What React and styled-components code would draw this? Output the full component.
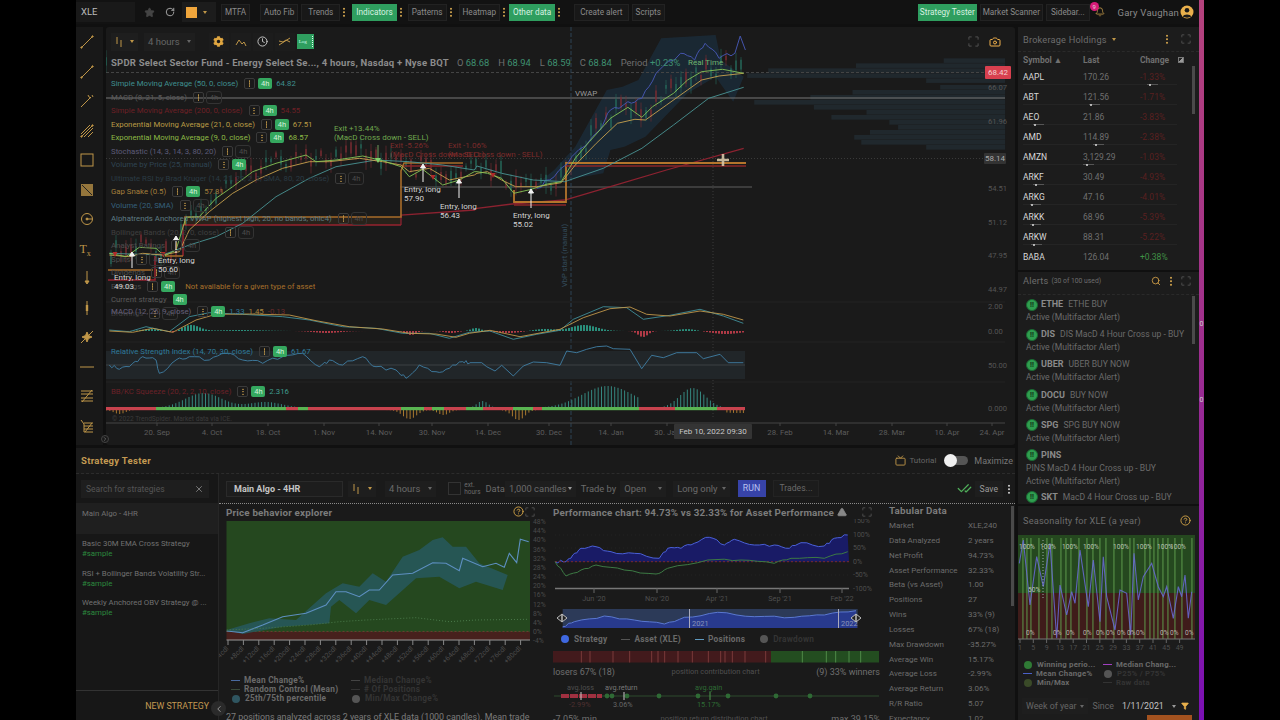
import styled, { createGlobalStyle } from "styled-components";
import { Star, RotateCw, Clock, Camera, Bell, X, Search, CheckCheck, Tv, ChevronLeft, ChevronRight, CircleHelp, TriangleAlert, Filter } from "lucide-react";
import { FaCog } from "react-icons/fa";

const GOLD = "#bf9648";
const DIM = "#8b8b8b";

const Global = createGlobalStyle`
  html, body { margin: 0; padding: 0; background: #000; }
  body { font-family: Roboto, "Liberation Sans", sans-serif; color: ${DIM}; }
  * { box-sizing: border-box; }
`;

// chart data is kept in page coordinates, traced from the picture
const z6 = pts => pts.map(([x, y]) => [76 + x / 3, 130 + y / 3]);
const z7 = pts => pts.map(([x, y]) => [470 + x / 2.85, 30 + y / 3]);
const z8 = pts => pts.map(([x, y]) => [470 + x / 3, 296 + y / 3]);
const z4 = pts => pts.map(([x, y]) => [540 + x / 3, 450 + y / 3]);
const z3 = pts => pts.map(([x, y]) => [76 + x / 3, 450 + y / 3]);
const z5 = pts => pts.map(([x, y]) => [1010 + x / 3, 270 + y / 3]);
const line = pts => pts.map(p => p[0].toFixed(1) + "," + p[1].toFixed(1)).join(" ");
const noise = i => {
  const v = Math.sin(i * 12.9898) * 43758.5453;
  return v - Math.floor(v);
};
const jag = (pts, amp) => {
  const out = [];
  pts.forEach((p, i) => {
    out.push(p);
    const n = pts[i + 1];
    if (!n) return;
    for (let k = 1; k < 4; k++) {
      const t = k / 4;
      out.push([p[0] + (n[0] - p[0]) * t, p[1] + (n[1] - p[1]) * t + (noise(i * 7 + k) - 0.5) * amp]);
    }
  });
  return out;
};
const yAt = (pts, x) => {
  for (let i = 0; i < pts.length - 1; i++) {
    if (x >= pts[i][0] && x <= pts[i + 1][0]) {
      const t = (x - pts[i][0]) / (pts[i + 1][0] - pts[i][0] || 1);
      return pts[i][1] + (pts[i + 1][1] - pts[i][1]) * t;
    }
  }
  return pts[pts.length - 1][1];
};
const bump = (x, c, w, a) => a * Math.exp(-((x - c) ** 2) / (w * w));

const greenEma = [
  ...z6([[100, 370], [150, 380], [190, 352], [240, 355], [265, 378], [300, 360], [330, 262], [370, 260], [420, 205], [470, 170], [530, 125], [600, 100], [690, 75], [720, 95], [780, 90], [860, 78], [920, 92], [975, 110], [1000, 140], [1040, 118], [1100, 165], [1150, 150], [1195, 125]]),
  ...z7([[20, 425], [50, 430], [90, 445], [125, 490], [175, 478], [220, 462], [260, 455], [300, 385], [340, 335], [400, 265], [450, 232], [490, 262], [520, 230], [580, 190], [620, 150], [660, 125], [720, 118], [780, 130]]),
];
const yellowEma = [
  ...z6([[100, 375], [160, 380], [200, 370], [260, 375], [310, 365], [340, 300], [400, 245], [470, 190], [540, 150], [620, 115], [700, 95], [760, 95], [850, 85], [920, 95], [975, 105], [1000, 125], [1060, 115], [1120, 150], [1195, 135]]),
  ...z7([[20, 430], [50, 425], [90, 450], [130, 470], [190, 470], [260, 458], [300, 405], [360, 340], [420, 280], [470, 268], [500, 270], [560, 225], [620, 180], [660, 150], [710, 138], [780, 130]]),
];
const tealSma = [
  ...z6([[100, 370], [260, 375], [340, 345], [420, 320], [500, 280], [600, 200], [700, 145], [780, 110], [900, 90], [1000, 95], [1100, 105], [1195, 120]]),
  ...z7([[20, 408], [90, 430], [180, 450], [270, 455], [380, 415], [490, 355], [580, 285], [680, 205], [780, 172]]),
];
const bluePrice = jag(z7([[190, 475], [240, 440], [290, 380], [370, 300], [400, 240], [450, 215], [490, 205], [530, 130], [600, 70], [640, 90], [670, 40], [710, 85], [755, 70]]), 5).concat(z7([[770, 18], [785, 60]]));
const bandShape = z7([[180, 470], [240, 420], [300, 350], [390, 180], [435, 170], [480, 150], [545, 25], [700, 15], [715, 90], [780, 140], [750, 215], [700, 140], [620, 190], [500, 320], [440, 350], [400, 360], [380, 430], [270, 450]]);
const redStop = [
  ...z6([[975, 285], [975, 255], [1195, 240]]),
  ...z7([[20, 535], [120, 522], [270, 510], [400, 470], [560, 420], [780, 355]]),
];
const candles = Array.from({ length: 128 }, (_, i) => {
  const x = 106 + i * 5;
  const base = yAt(greenEma, x) - 3 + (noise(i) - 0.5) * 18;
  const h = 3 + noise(i + 40) * 9;
  return { x, top: base - h / 2, h, wick: 2 + noise(i + 90) * 6, up: noise(i + 20) > 0.45 };
});
const profile = [[85, 1350], [100, 1100], [115, 850], [130, 790], [145, 1300], [165, 1340], [180, 1090], [195, 970], [210, 810], [225, 980], [240, 1130], [255, 1030], [270, 1195], [285, 1220], [300, 1140], [315, 1095], [330, 1115], [345, 1300]];
const macdBars = Array.from({ length: 213 }, (_, i) => {
  const x = 106 + i * 3;
  const v = bump(x, 190, 12, 6) + bump(x, 150, 12, 2) - bump(x, 172, 6, 2) + bump(x, 240, 30, 1) - bump(x, 326, 18, 2) - bump(x, 410, 7, 4) - bump(x, 450, 9, 2)
    + bump(x, 475, 7, 3) - bump(x, 508, 16, 2) + bump(x, 543, 14, 2) + bump(x, 583, 18, 6) - bump(x, 642, 7, 6) + bump(x, 686, 13, 2) - bump(x, 725, 20, 3);
  return { x, v };
});
const macdTeal = [
  ...z6([[100, 600], [160, 605], [210, 590], [280, 605], [340, 560], [400, 548], [500, 553], [620, 560], [700, 570], [800, 590], [900, 595], [980, 610], [1060, 610], [1120, 625], [1180, 607]]),
  ...z8([[60, 105], [130, 130], [200, 115], [270, 103], [310, 70], [400, 32], [470, 35], [520, 70], [600, 58], [690, 40], [760, 60], [820, 82]]),
];
const macdYellow = [
  ...z6([[100, 603], [170, 607], [230, 595], [290, 607], [360, 570], [420, 553], [520, 552], [640, 555], [720, 572], [820, 590], [920, 597], [1000, 610], [1080, 612], [1140, 622], [1180, 610]]),
  ...z8([[60, 103], [150, 122], [270, 100], [340, 65], [420, 38], [480, 33], [530, 55], [600, 60], [690, 45], [760, 55], [820, 72]]),
];
const rsiLine = [
  ...jag(z6([[100, 705], [130, 718], [170, 700], [200, 680], [240, 690], [250, 730], [300, 690], [340, 680], [400, 690], [450, 670], [500, 690], [560, 700], [620, 680], [680, 670], [730, 710], [760, 690], [800, 705], [860, 680], [900, 710], [960, 720], [990, 745], [1030, 705], [1080, 725], [1120, 715], [1160, 695], [1180, 700]]), 4),
  ...z8([[0, 200], [35, 200], [50, 212], [75, 225], [95, 208], [130, 240], [160, 210], [190, 198], [230, 200], [270, 208], [290, 165], [320, 170], [350, 160], [380, 152], [410, 150], [430, 158], [480, 160], [515, 218], [545, 178], [580, 185], [620, 170], [680, 170], [700, 188], [750, 175], [775, 200], [820, 200]]),
];
const squeezeBars = Array.from({ length: 194 }, (_, i) => {
  const x = 106 + i * 3.3;
  const up = bump(x, 203, 26, 15) + bump(x, 265, 24, 6) + bump(x, 482, 8, 7) + (x > 542 && x < 639 ? bump(x, 607, 36, 22) : 0) + bump(x, 692, 18, 20);
  const down = bump(x, 119, 8, 4) + bump(x, 409, 10, 9) + bump(x, 443, 8, 5) + bump(x, 518, 9, 10) + (x > 725 ? 3 : 0);
  return { x, v: up - down };
});
const squeezeRuns = [[106, 156, "#c8434e"], [156, 176, "#5ab552"], [176, 286, "#5ab552"], [286, 298, "#c8434e"], [298, 308, "#5ab552"], [308, 401, "#c8434e"], [401, 424, "#5ab552"], [424, 432, "#c8434e"], [432, 444, "#5ab552"], [444, 466, "#c8434e"], [466, 483, "#5ab552"], [483, 513, "#c8434e"], [513, 533, "#5ab552"], [533, 542, "#c8434e"], [542, 639, "#5ab552"], [639, 675, "#c8434e"], [675, 717, "#5ab552"], [717, 745, "#c8434e"]];

const bandPrice = z3([[452, 540], [520, 520], [580, 505], [660, 510], [750, 430], [800, 400], [850, 410], [890, 370], [930, 395], [980, 320], [1030, 300], [1070, 270], [1100, 262], [1130, 290], [1170, 290], [1210, 340], [1295, 375], [1280, 420], [1200, 395], [1150, 415], [1090, 380], [1020, 385], [930, 465], [880, 450], [840, 490], [790, 450], [765, 470], [760, 520], [620, 530], [500, 552]]);
const meanPrice = z3([[452, 543], [500, 548], [560, 525], [620, 500], [690, 490], [750, 465], [780, 425], [810, 425], [850, 440], [880, 420], [910, 420], [950, 375], [1010, 370], [1070, 338], [1110, 340], [1150, 362], [1160, 325], [1220, 350], [1260, 340], [1285, 352], [1300, 310], [1322, 338], [1333, 268], [1358, 275]]);
const randomPrice = z3([[452, 540], [560, 535], [700, 525], [790, 515], [870, 510], [1020, 503], [1120, 515], [1200, 510], [1358, 508]]);

const perfBlue = jag(z4([[42, 335], [75, 335], [95, 315], [120, 295], [165, 290], [210, 305], [280, 310], [355, 325], [380, 295], [420, 295], [460, 280], [505, 262], [550, 285], [580, 268], [640, 285], [700, 285], [745, 295], [780, 278], [850, 288], [880, 265], [920, 255]]), 3);
const perfGreen = jag(z4([[42, 335], [75, 378], [120, 360], [165, 345], [250, 360], [345, 372], [380, 355], [500, 330], [600, 330], [700, 340], [750, 325], [850, 325], [920, 305]]), 2);
const navLine = jag(z4([[65, 530], [100, 515], [190, 498], [280, 510], [370, 522], [430, 502], [530, 487], [640, 500], [760, 502], [850, 495], [945, 482]]), 2);
const lossTicks = [127, 153, 222, 272, 338, 357, 377, 417, 460, 508, 545, 558, 580, 618, 680];
const winTicks = [790, 862, 890, 930, 965];

const seasonBars = [1022, 1026, 1030, 1038, 1046, 1051, 1060, 1065, 1070, 1078, 1086, 1092, 1099, 1105, 1113, 1121, 1129, 1133, 1144, 1149, 1153, 1157, 1162, 1167, 1174, 1181, 1191];
const seasonBlue = z5([[28, 880], [40, 810], [60, 1005], [80, 860], [100, 950], [120, 820], [140, 1105], [150, 945], [170, 1035], [185, 965], [195, 1000], [210, 840], [235, 1010], [250, 870], [270, 1055], [280, 860], [290, 980], [315, 1080], [330, 960], [350, 970], [362, 1095], [372, 850], [385, 990], [400, 920], [425, 880], [445, 950], [460, 980], [470, 950], [490, 1045], [505, 950], [515, 980], [525, 915], [535, 1045], [545, 965]]);

const Page = styled.div`
  width: 1280px;
  height: 720px;
  background: #000;
  overflow: hidden;
  display: flex;
  padding-left: 76px;
`;
const Screen = styled.div`
  width: 1123px;
  height: 720px;
  background: #101010;
  display: flex;
  flex-direction: column;
`;
const Stripe = styled.div`
  width: 5px;
  height: 720px;
  background: linear-gradient(#b4427c, #a0308c 45%, #7a10b4);
  color: #ccc;
  font-size: 7px;
  display: flex;
  flex-direction: column;
  align-items: center;
  gap: 68px;
  padding-top: 320px;
`;
const TopBar = styled.div`
  height: 24px;
  flex: none;
  display: flex;
  align-items: center;
  background: #121212;
  font-size: 8.2px;
`;
const Ticker = styled.div`
  width: 59px;
  height: 20px;
  background: #191919;
  color: #bbb;
  font-size: 9.5px;
  line-height: 20px;
  padding-left: 5px;
  margin-right: 9px;
`;
const BarIcon = styled.span`
  display: inline-flex;
  color: ${p => p.$color || "#aaa"};
  margin-right: ${p => p.$mr || 0}px;
`;
const ColorSwatch = styled.span`
  width: 34px;
  height: 20px;
  background: #1c1c1c;
  display: flex;
  align-items: center;
  gap: 6px;
  padding-left: 4px;
  margin: 0 5px 0 7px;
  &::before { content: ""; width: 11px; height: 11px; background: #f0a63c; }
`;
const Caret = styled.span`
  width: 0;
  height: 0;
  border-left: 2.5px solid transparent;
  border-right: 2.5px solid transparent;
  border-top: 3px solid ${p => p.$color || GOLD};
  margin-left: ${p => p.$ml || 0}px;
  flex: none;
`;
const TopButton = styled.div`
  height: 17px;
  line-height: 15px;
  padding: 0 ${p => p.$pad ?? 3}px;
  margin-left: ${p => p.$ml ?? 0}px;
  margin-right: ${p => p.$mr ?? 3}px;
  text-align: center;
  border: 1px solid ${p => (p.$on ? "#2f9e5f" : "#222")};
  background: ${p => (p.$on ? "#2f9e5f" : "#181818")};
  color: ${p => (p.$on ? "#d9f2e2" : DIM)};
  white-space: nowrap;
`;
const Dots = styled.span`
  width: 2px;
  height: 10px;
  margin: 0 ${p => p.$m ?? 3}px;
  flex: none;
  background: radial-gradient(circle at center, ${p => p.$color || GOLD} 1px, transparent 1.1px) 0 0 / 2px 3.5px;
`;
const Spacer = styled.div`
  flex: 1;
`;
const UserName = styled.span`
  font-size: 9.5px;
  letter-spacing: 0.2px;
  margin: 0 1px 0 13px;
`;
const BellWrap = styled.span`
  position: relative;
  display: inline-flex;
  margin-left: 5px;
  color: ${GOLD};
`;
const Badge = styled.span`
  position: absolute;
  top: -5px;
  left: -5px;
  width: 9px;
  height: 9px;
  border-radius: 50%;
  background: #d81b78;
  color: #ddd;
  font-size: 6px;
  line-height: 9px;
  text-align: center;
`;
const Avatar = styled.span`
  display: inline-flex;
  margin-right: 5px;
`;
const Body = styled.div`
  flex: 1;
  display: flex;
  gap: 3px;
  min-height: 0;
  padding-top: 3px;
`;
const LeftCol = styled.div`
  width: 939px;
  flex: none;
  display: flex;
  flex-direction: column;
  gap: 3px;
`;
const ChartRow = styled.div`
  height: 418px;
  flex: none;
  display: flex;
  gap: 3px;
`;
const Rail = styled.div`
  width: 27px;
  flex: none;
  background: #181818;
  display: flex;
  flex-direction: column;
  align-items: center;
  justify-content: space-between;
  padding: 8px 6px 12px 0;
  position: relative;
`;
const RailBtn = styled.span`
  display: flex;
  width: 14px;
  height: 14px;
  color: ${GOLD};
  font-family: "Liberation Serif", serif;
  font-size: 12px;
  line-height: 14px;
  sub { font-size: 8px; }
`;
const RailOpen = styled.span`
  position: absolute;
  right: -6px;
  bottom: 2px;
  width: 8px;
  height: 8px;
  border-radius: 50%;
  border: 1px solid #444;
  background: #1a1a1a;
  color: #999;
  display: flex;
  z-index: 3;
`;
const ChartPanel = styled.div`
  position: relative;
  flex: 1;
  background: #1a1a1a;
  overflow: hidden;
  border-radius: 3px;
`;
const Plot = styled.svg`
  position: absolute;
  inset: 0;
`;
const ChartFlow = styled.div`
  position: relative;
  padding: 5px 0 0 5px;
`;
const ChartTools = styled.div`
  height: 19px;
  display: flex;
  align-items: center;
  color: ${GOLD};
  font-size: 9.5px;
`;
const ToolSelect = styled.span`
  display: flex;
  align-items: center;
  gap: 7px;
  height: 18px;
  padding: 0 4px;
  color: #666;
  background: #1e1e1e;
  margin-right: ${p => p.$mr ?? 6}px;
`;
const ToolBtn = styled.span`
  width: 20px;
  height: 18px;
  margin-right: 2px;
  display: flex;
  align-items: center;
  justify-content: center;
  background: #1c1c1c;
`;
const LogBtn = styled.span`
  width: 17px;
  height: 15px;
  background: #2f9e5f;
  color: #cfe;
  font: 5px/15px "Liberation Serif", serif;
  padding-left: 2px;
  position: relative;
  &::after { content: ""; position: absolute; right: 1px; top: 2px; height: 11px; border-right: 1px dotted #dfe; }
`;
const SymbolLine = styled.div`
  display: flex;
  align-items: center;
  height: 16px;
  margin-top: 3px;
  font-size: 9.4px;
  white-space: nowrap;
`;
const SymbolName = styled.b`
  font-size: 9.5px;
  letter-spacing: 0.22px;
  color: #8c8c8c;
  font-weight: 700;
  margin-right: 8px;
`;
const Ohlc = styled.span`
  margin-right: 9px;
  color: #6f6f6f;
  b { font-weight: 400; color: #3f9071; }
`;
const Legend = styled.div`
  margin-top: 7px;
  display: flex;
  flex-direction: column;
`;
const LegendRow = styled.div`
  height: 13.5px;
  display: flex;
  align-items: center;
  font-size: 7.8px;
  white-space: nowrap;
  color: ${p => p.$color};
`;
const ChipValue = styled.span`
  margin-left: ${p => p.$ml ?? 4}px;
  color: ${p => p.$color || "inherit"};
`;
const DotsChip = styled.span`
  width: 11px;
  height: 11px;
  margin-left: 6px;
  border: 1px solid #3a3a3a;
  border-radius: 2px;
  display: flex;
  justify-content: center;
  align-items: center;
  &::after {
    content: "";
    width: 1.5px;
    height: 7px;
    background: radial-gradient(circle at center, ${GOLD} 0.8px, transparent 0.9px) 0 0 / 1.5px 2.5px;
  }
`;
const TimeChip = styled.span`
  width: 14px;
  height: 11px;
  margin-left: ${p => p.$ml ?? 3}px;
  border-radius: 2px;
  font-size: 7.5px;
  line-height: 11px;
  text-align: center;
  background: ${p => (p.$on ? "#35a85f" : "transparent")};
  color: ${p => (p.$on ? "#d4f0dd" : "#4c4c4c")};
  outline: ${p => (p.$on ? "none" : "1px solid #333")};
`;
const Note = styled.div`
  position: absolute;
  left: ${p => p.$x - 106}px;
  top: ${p => p.$y - 27}px;
  color: ${p => p.$color || "#d4d4d4"};
  font-size: ${p => p.$size || 8}px;
  line-height: 9px;
  white-space: pre;
`;
const PaneLegend = styled(LegendRow)`
  position: absolute;
  left: 5px;
  top: ${p => p.$y - 27}px;
`;
const PriceTag = styled.div`
  position: absolute;
  left: ${p => p.$x - 106}px;
  top: ${p => p.$y - 27}px;
  width: ${p => p.$w}px;
  height: ${p => p.$h}px;
  line-height: ${p => p.$h}px;
  text-align: center;
  font-size: 8px;
  background: ${p => p.$bg};
  color: ${p => p.$color};
  border-radius: 1px;
`;
const CornerSpot = styled.div`
  position: absolute;
  left: ${p => p.$x - 106}px;
  top: ${p => p.$y - 27}px;
  color: ${p => p.$color || "#555"};
  display: flex;
`;
const VertNote = styled.div`
  position: absolute;
  left: 454px;
  top: 197px;
  writing-mode: vertical-rl;
  transform: rotate(180deg);
  color: #334a5a;
  font-size: 7.5px;
`;
const Tester = styled.div`
  flex: 1;
  min-height: 0;
  background: #1a1a1a;
  display: flex;
  flex-direction: column;
`;
const TesterHead = styled.div`
  height: 26px;
  flex: none;
  display: flex;
  align-items: center;
  padding: 0 2px 0 5px;
  border-bottom: 1px dashed #2c2c2c;
`;
const TesterTitle = styled.b`
  color: #c49a52;
  font-size: 9.5px;
  letter-spacing: 0.3px;
`;
const TutorialLink = styled.span`
  display: flex;
  align-items: center;
  gap: 3px;
  color: #666;
  font-size: 8px;
  margin-right: 9px;
`;
const Toggle = styled.span`
  width: 23px;
  height: 9px;
  border-radius: 5px;
  background: #555;
  position: relative;
  margin-right: 6px;
  &::before { content: ""; position: absolute; left: -1px; top: -2px; width: 13px; height: 13px; border-radius: 50%; background: #f0f0f0; }
`;
const HeadLabel = styled.span`
  font-size: 9px;
  color: #777;
`;
const TesterBody = styled.div`
  flex: 1;
  display: flex;
  min-height: 0;
`;
const Sidebar = styled.div`
  width: 143px;
  flex: none;
  display: flex;
  flex-direction: column;
  background: #171717;
  border-right: 1px solid #262626;
  position: relative;
`;
const SearchBox = styled.div`
  margin: 6px 9px 5px 5px;
  height: 18px;
  background: #1e1e1e;
  color: #555;
  font-size: 8.5px;
  display: flex;
  align-items: center;
  justify-content: space-between;
  padding: 0 5px;
`;
const StrategyItem = styled.div`
  height: ${p => (p.$active ? 31 : 29.6)}px;
  padding: ${p => (p.$active ? "6px" : "3px")} 6px 0;
  font-size: 7.8px;
  line-height: 10px;
  color: #717171;
  background: ${p => (p.$active ? "#1f1f1f" : "transparent")};
  margin-bottom: ${p => (p.$active ? 2 : 0)}px;
  white-space: nowrap;
  overflow: hidden;
  em { display: block; font-style: normal; color: #2c8a3e; }
`;
const SideFoot = styled.div`
  margin-top: auto;
  height: 30px;
  border-top: 1px solid #333;
  display: flex;
  align-items: center;
  justify-content: flex-end;
  padding: 0 9px 0 0;
  color: #c49a52;
  font-size: 8.8px;
`;
const Collapse = styled.span`
  position: absolute;
  right: -8px;
  bottom: 4px;
  width: 15px;
  height: 15px;
  border-radius: 50%;
  background: #2a2a2a;
  color: #aaa;
  display: flex;
  align-items: center;
  justify-content: center;
  z-index: 2;
`;
const TesterMain = styled.div`
  flex: 1;
  display: flex;
  flex-direction: column;
  min-width: 0;
  overflow: hidden;
`;
const ConfigRow = styled.div`
  height: 30px;
  flex: none;
  display: flex;
  align-items: center;
  padding: 0 0 0 7px;
  font-size: 9.4px;
  color: #6b6b6b;
  border-bottom: 1px dotted #8a8a8a;
  white-space: nowrap;
`;
const NameField = styled.b`
  width: 117px;
  height: 16px;
  border: 1px solid #2a2a2a;
  background: #1d1d1d;
  color: #c4c4c4;
  font-size: 9px;
  line-height: 14px;
  padding-left: 7px;
  margin-right: 5px;
`;
const ConfigSelect = styled.span`
  height: 16px;
  display: flex;
  align-items: center;
  gap: ${p => p.$gap ?? 6}px;
  padding: 0 4px;
  background: #1e1e1e;
  margin-left: ${p => p.$ml ?? 0}px;
  margin-right: ${p => p.$mr ?? 6}px;
`;
const ExtBox = styled.span`
  width: 13px;
  height: 13px;
  border: 1px solid #333;
  margin-right: 3px;
`;
const ExtLabel = styled.span`
  font-size: 6.4px;
  line-height: 6.5px;
  margin-right: 5px;
`;
const RunBtn = styled.span`
  width: 28px;
  height: 17px;
  background: #3743a8;
  color: #b8c0f0;
  text-align: center;
  line-height: 17px;
  font-size: 8.8px;
  margin: 0 7px 0 8px;
`;
const Trades = styled.span`
  height: 17px;
  line-height: 15px;
  padding: 0 6px;
  border: 1px solid #232323;
  background: #1c1c1c;
  font-size: 8.6px;
`;
const SaveBtn = styled.span`
  height: 16px;
  line-height: 16px;
  padding: 0 5px;
  margin-left: 3px;
  background: #1e1e1e;
  color: #999;
  font-size: 8.6px;
`;
const Panes = styled.div`
  flex: 1;
  display: flex;
  min-height: 0;
`;
const PricePane = styled.div`
  width: 334px;
  flex: none;
  padding: 1px 0 0 7px;
  position: relative;
`;
const PerfPane = styled.div`
  width: 336px;
  flex: none;
  position: relative;
  padding-top: 1px;
`;
const PaneTitle = styled.div`
  height: 14px;
  display: flex;
  align-items: center;
  gap: 3px;
  font-size: 9.8px;
  font-weight: 700;
  color: #7c7c7c;
  letter-spacing: 0.18px;
  white-space: nowrap;
`;
const HelpSpot = styled.span`
  position: absolute;
  left: 294px;
  top: 2px;
  color: #d4a548;
  display: flex;
`;
const CornerRight = styled.span`
  position: absolute;
  right: ${p => p.$r}px;
  top: 3px;
  color: #555;
  display: flex;
`;
const CornerInline = styled.span`
  margin-left: ${p => p.$ml || 0}px;
  color: #555;
  display: flex;
`;
const ChartSvg = styled.svg`
  display: block;
  overflow: ${p => (p.$spill ? "visible" : "hidden")};
  margin-top: ${p => p.$mt || 0}px;
`;
const PriceLegend = styled.div`
  display: grid;
  grid-template-columns: 120px 1fr;
  padding: 7px 0 0 5px;
  font-size: 8.3px;
  font-weight: 700;
  letter-spacing: 0.25px;
  line-height: 9px;
  color: #6a6a6a;
`;
const KeyItem = styled.span`
  display: flex;
  align-items: center;
  gap: 4px;
  color: ${p => (p.$off ? "#343434" : "#6a6a6a")};
  white-space: nowrap;
  &::before {
    content: "";
    width: ${p => (p.$dot ? 8 : 9)}px;
    height: ${p => (p.$dot ? 8 : 1)}px;
    border-radius: ${p => (p.$dot ? "50%" : 0)};
    margin: 0 ${p => (p.$dot ? 1 : 0)}px;
    background: ${p => p.$key};
  }
`;
const PriceNote = styled.div`
  font-size: 8.9px;
  margin-top: 9px;
  white-space: nowrap;
  color: #7b7b7b;
`;
const PerfKeys = styled.div`
  height: 14px;
  display: flex;
  gap: 14px;
  align-items: center;
  padding-left: 7px;
  margin-bottom: 5px;
  font-size: 8.3px;
  font-weight: 700;
  letter-spacing: 0.25px;
`;
const PerfCaption = styled.div`
  display: flex;
  justify-content: space-between;
  align-items: center;
  width: 327px;
  font-size: 9px;
  height: 11px;
  margin-top: 3px;
  color: #6f6f6f;
  span.mid { font-size: 7.5px; color: #4f4f4f; }
`;
const Tabular = styled.div`
  flex: 1;
  position: relative;
  font-size: 8px;
  padding-top: 1px;
`;
const TabHead = styled.div`
  height: 14px;
  font-size: 9.8px;
  font-weight: 700;
  color: #7c7c7c;
  letter-spacing: 0.2px;
`;
const TabRow = styled.div`
  height: 14.85px;
  line-height: 14.85px;
  display: grid;
  grid-template-columns: 79px 1fr;
  color: #6c6c6c;
  white-space: nowrap;
`;
const VScroll = styled.span`
  position: absolute;
  right: ${p => p.$r}px;
  top: ${p => p.$t}px;
  width: 3px;
  height: ${p => p.$h}px;
  background: #4a4a4a;
`;
const RightCol = styled.div`
  width: 181px;
  flex: none;
  display: flex;
  flex-direction: column;
  gap: 2px;
  margin-right: 0;
`;
const SidePanel = styled.div`
  height: ${p => p.$h}px;
  flex: ${p => (p.$h ? "none" : 1)};
  background: #1c1c1c;
  position: relative;
  overflow: hidden;
`;
const PanelHead = styled.div`
  height: ${p => p.$h || 25}px;
  display: flex;
  align-items: center;
  padding: 0 8px ${p => p.$pb || 0}px 5px;
  font-size: 9.2px;
  letter-spacing: 0.2px;
  color: #6d6d6d;
  border-bottom: ${p => (p.$plain ? "none" : "1px dashed #2a2a2a")};
  small { font-size: 6.8px; margin-left: 3px; letter-spacing: 0; }
`;
const HoldGrid = styled.div`
  display: grid;
  grid-template-columns: 60px 57px 1fr;
  padding-left: 5px;
  align-items: center;
  font-size: 8.5px;
  height: ${p => (p.$head ? 15 : 20)}px;
  font-weight: ${p => (p.$head ? 700 : 400)};
  color: #6f6f6f;
  position: relative;
  b { font-weight: 400; color: #d8d8d8; }
`;
const RowRule = styled.span`
  position: absolute;
  left: 5px;
  right: 22px;
  bottom: 2px;
  height: 1px;
  background: #242424;
`;
const RangeMark = styled.span`
  position: absolute;
  left: ${p => p.$l}px;
  bottom: 2px;
  width: 11px;
  height: 1px;
  background: #555;
  &::before { content: ""; position: absolute; left: ${p => p.$dot}px; top: -0.5px; width: 2px; height: 2px; border-radius: 50%; background: #ddd; }
`;
const SortGlyph = styled.span`
  position: absolute;
  right: 15px;
  top: 5px;
  width: 6px;
  height: 6px;
  background: linear-gradient(135deg, #222 50%, #999 50%);
  border: 1px solid #777;
`;
const Change = styled.span`
  color: ${p => (p.$up ? "#3f8f45" : "#5a2020")};
`;
const AlertItem = styled.div`
  padding: 3px 4px 0 8px;
  height: ${p => (p.$tall ? 42 : 30.2)}px;
  font-size: 8.6px;
  line-height: 13px;
  color: #6b6b6b;
  white-space: nowrap;
  > div { display: flex; align-items: center; gap: 3px; }
  b { color: #8a8a8a; font-weight: 700; font-size: 9px; margin-right: 2px; }
`;
const AlertMark = styled.span`
  width: 12px;
  height: 12px;
  border-radius: 50%;
  background: #2f9e4f;
  border: 1px solid #1a6a33;
  color: #0f2a15;
  font-size: 7px;
  line-height: 10px;
  text-align: center;
  font-weight: 700;
`;
const SeasonKeys = styled.div`
  display: grid;
  grid-template-columns: 80px 1fr;
  padding: 10px 0 0 5px;
  font-size: 7.8px;
  font-weight: 700;
  letter-spacing: 0.2px;
  line-height: 9px;
`;
const SeasonFoot = styled.div`
  height: 18px;
  margin-top: 10px;
  padding-left: 4px;
  display: flex;
  align-items: center;
  font-size: 8.8px;
  color: #666;
  position: relative;
  white-space: nowrap;
`;
const DateValue = styled.span`
  color: #c4c4c4;
  margin: 0 8px 0 8px;
`;
const FilterIcon = styled(Filter)`
  margin-left: 5px;
`;
const Orange = styled.span`
  position: absolute;
  right: 7px;
  bottom: -8px;
  width: 45px;
  height: 8px;
  background: #a3521f;
`;

const Corners = ({ size = 12, color = "currentColor" }) => (
  <svg width={size} height={size} viewBox="0 0 12 12" fill="none" stroke={color} strokeWidth="1">
    <path d="M1 4V1H4M8 1H11V4M11 8V11H8M4 11H1V8" />
  </svg>
);
const RailDiag = ({ hatch }) => (
  <svg width="14" height="14" viewBox="0 0 14 14" fill="none" stroke="currentColor">
    <path d="M1 13L13 1" />
    <circle cx="1.5" cy="12.5" r=".7" fill="currentColor" />
    <circle cx="12.5" cy="1.5" r=".7" fill="currentColor" />
    {hatch && <path d="M4 13L13 4M1 10L10 1M8 13L13 8" />}
  </svg>
);
const railDrawings = [
  <RailDiag />,
  <RailDiag />,
  <svg width="14" height="14" viewBox="0 0 14 14" fill="none" stroke="currentColor"><path d="M1 13L11 3M8 1l1 2 2 1M12 1l1 2" /></svg>,
  <RailDiag hatch />,
  <svg width="14" height="14" viewBox="0 0 14 14" fill="none" stroke="currentColor"><rect x="1" y="1" width="12" height="12" /></svg>,
  <svg width="14" height="14" viewBox="0 0 14 14" fill="currentColor" stroke="none"><rect x="1" y="1" width="12" height="12" opacity=".75" /><path d="M2 2L12 12" stroke="#222" /></svg>,
  <svg width="14" height="14" viewBox="0 0 14 14" fill="none" stroke="currentColor"><circle cx="7" cy="7" r="5.5" /><circle cx="7" cy="7" r="1" fill="currentColor" /><path d="M7 7h5" /></svg>,
  <span>T<sub>x</sub></span>,
  <svg width="14" height="14" viewBox="0 0 14 14" fill="currentColor" stroke="currentColor"><path d="M7 0V11" /><path d="M5 10h4l-2 3z" /></svg>,
  <svg width="14" height="14" viewBox="0 0 14 14" fill="none" stroke="currentColor"><path d="M7 0V14" /><path d="M7 4V10" strokeWidth="2.4" /></svg>,
  <svg width="14" height="14" viewBox="0 0 14 14" fill="currentColor" stroke="currentColor"><path d="M1 13L13 1" /><path d="M7 2l1.5 3.5L12 7 8.5 8.5 7 12 5.5 8.5 2 7l3.5-1.5z" /></svg>,
  <svg width="14" height="14" viewBox="0 0 14 14" fill="none" stroke="currentColor"><path d="M0 7H14" /></svg>,
  <svg width="14" height="14" viewBox="0 0 14 14" fill="none" stroke="currentColor"><path d="M1 2H13M1 5H13M1 9H13M1 12H13M2 13L12 1" /></svg>,
  <svg width="14" height="14" viewBox="0 0 14 14" fill="none" stroke="currentColor"><path d="M4 4H13M4 7H13M4 10H13M4 13H13M1 1L4 5V13M5 13L12 4" /></svg>,
];

const TEAL = "#3f8f8f";
const legendRows = [
  { name: "Simple Moving Average (50, 0, close)", color: TEAL, chip: true, value: "64.82" },
  { name: "MACD (8, 21, 5, close)", color: "#5c5c5c" },
  { name: "Simple Moving Average (200, 0, close)", color: "#6d2026", chip: true, value: "54.55" },
  { name: "Exponential Moving Average (21, 0, close)", color: "#b99a45", chip: true, value: "67.51" },
  { name: "Exponential Moving Average (9, 0, close)", color: "#8dbb45", chip: true, value: "68.57" },
  { name: "Stochastic (14, 3, 14, 3, 80, 20)", color: "#5d5a78" },
  { name: "Volume by Price (25, manual)", color: "#2f4452", chip: true },
  { name: "Ultimate RSI by Brad Kruger (14, 21, 28, 2, 2, SMA, 80, 20, close)", color: "#2a3a44" },
  { name: "Gap Snake (0.5)", color: "#a37f3c", chip: true, value: "57.81" },
  { name: "Volume (20, SMA)", color: "#35607c" },
  { name: "Alphatrends Anchored VWAP (highest high, 20, no bands, ohlc4)", color: "#5e7c84" },
  { name: "Bollinger Bands (20, 2, 0, close)", color: "#3f3f3f" },
  { name: "Analyst Ratings", color: "#4d4d4d" },
  { name: "Splits", color: "#4d4d4d" },
  { name: "Dividends", color: "#4d4d4d" },
  { name: "Earnings", color: "#4d4d4d", chip: true, warn: "Not available for a given type of asset" },
  { name: "Current strategy", color: "#5a5a5a", chip: true, noDots: true },
  { name: "Drawings", color: "#3c3c3c" },
];
const notes = [
  { x: 114, y: 273, text: "Entry, long\n49.03" },
  { x: 158, y: 256, text: "Entry, long\n50.60" },
  { x: 404, y: 185, text: "Entry, long\n57.90" },
  { x: 440, y: 202, text: "Entry, long\n56.43" },
  { x: 513, y: 211, text: "Entry, long\n55.02" },
  { x: 334, y: 124, text: "Exit +13.44%\n(MacD Cross down - SELL)", color: "#6fa84e" },
  { x: 390, y: 141, text: "Exit -5.26%\n(MacD Cross down - SELL)", color: "#7c2a2a" },
  { x: 448, y: 141, text: "Exit -1.06%\n(MacD Cross down - SELL)", color: "#7c2a2a" },
  { x: 575, y: 89, text: "VWAP", color: "#999" },
  { x: 688, y: 58, text: "Real Time", color: "#6fb36f" },
  { x: 112, y: 415, text: "© 2022 TrendSpider. Market data via ICE.", color: "#3a3a3a", size: 6.6 },
];
const axisDates = [[157, "20. Sep"], [212, "4. Oct"], [268, "18. Oct"], [324, "1. Nov"], [379, "14. Nov"], [432, "30. Nov"], [488, "14. Dec"], [549, "30. Dec"], [611, "14. Jan"], [667, "30. Jan"], [780, "28. Feb"], [836, "14. Mar"], [892, "28. Mar"], [947, "10. Apr"], [992, "24. Apr"]];
const axisPrices = [[66.07, 90], [61.96, 124], [54.51, 191], [51.12, 225], [47.95, 258], [44.97, 292], ["2.00", 309], ["0.00", 334], ["50.00", 368], ["0.000", 411]];

const holdings = [
  ["AAPL", "170.26", "-1.33%", 129, 2], ["ABT", "121.56", "-1.71%", 71, 1], ["AEO", "21.86", "-3.83%", 15, 1], ["AMD", "114.89", "-2.38%", 75, 2], ["AMZN", "3,129.29", "-1.03%", 65, 3],
  ["ARKF", "30.49", "-4.93%", 15, 2], ["ARKG", "47.16", "-4.01%", 12, 1], ["ARKK", "68.96", "-5.39%", 12, 2], ["ARKW", "88.31", "-5.22%", 13, 2],
];
const alerts = [
  ["ETHE", "ETHE BUY"], ["DIS", "DIS MacD 4 Hour Cross up - BUY"], ["UBER", "UBER BUY NOW"], ["DOCU", "BUY NOW"], ["SPG", "SPG BUY NOW"], ["PINS", "PINS MacD 4 Hour Cross up - BUY", true], ["SKT", "MacD 4 Hour Cross up - BUY"],
];
const tabular = [
  ["Market", "XLE,240"], ["Data Analyzed", "2 years"], ["Net Profit", "94.73%"], ["Asset Performance", "32.33%"], ["Beta (vs Asset)", "1.00"], ["Positions", "27"], ["Wins", "33% (9)"], ["Losses", "67% (18)"],
  ["Max Drawdown", "-35.27%"], ["Average Win", "15.17%"], ["Average Loss", "-2.99%"], ["Average Return", "3.06%"], ["R/R Ratio", "5.07"], ["Expectancy", "1.02"],
];

const MainChart = () => (
  <Plot width="912" height="418" viewBox="106 27 912 418">
    <polygon points={line(bandShape)} fill="#1b2b38" opacity=".85" />
    {profile.map(([y, x]) => (
      <rect key={y} x={470 + x / 2.85} y={30 + y / 3} width={(1525 - x) / 2.85} height="4.6" fill="#20282d" />
    ))}
    <path d="M106 72.5H985" stroke="#444" strokeDasharray="3 2" />
    <path d="M106 98H1005" stroke="#767676" />
    <path d="M106 158.5H985" stroke="#3a3a3a" strokeDasharray="1 2" />
    <path d="M400 187H752" stroke="#5e5e5e" />
    <path d="M571 27V445" stroke="#2c4254" strokeDasharray="4 2" />
    <path d="M713 110V418" stroke="#3a3a3a" strokeDasharray="1 2" />
    <path d="M106 302H1005M106 342H1005M106 382H1005" stroke="#232323" />
    <rect x="185" y="217" width="216" height="8" fill="#33281a" opacity=".6" />
    {candles.map((c, i) => (
      <g key={i} stroke={c.up ? "#25685a" : "#7a2c32"}>
        <path d={`M${c.x} ${c.top - c.wick}V${c.top + c.h + c.wick}`} strokeWidth=".6" />
        <path d={`M${c.x} ${c.top}V${c.top + c.h}`} strokeWidth="1.3" />
      </g>
    ))}
    <polyline points={line(redStop)} fill="none" stroke="#8c2230" strokeWidth="1.3" />
    <path d="M108 280H155V256M183 256V225H401" fill="none" stroke="#96232f" strokeWidth="1.5" />
    <path d="M108 270H153M163 256H183M185 225V217H401V171L404 163H463" fill="none" stroke="#a86c2a" strokeWidth="1.6" />
    <path d="M404 166H463M514 205H566" fill="none" stroke="#8a2628" strokeWidth="1.4" />
    <path d="M514 190V202H566V163H746" fill="none" stroke="#b4752c" strokeWidth="1.8" />
    <path d="M566 166H746" fill="none" stroke="#8a2628" strokeWidth="1.5" />
    <polyline points={line(bluePrice)} fill="none" stroke="#4454ac" strokeWidth="1" />
    <polyline points={line(tealSma)} fill="none" stroke="#4a9494" strokeWidth=".9" />
    <polyline points={line(yellowEma)} fill="none" stroke="#c8a24e" strokeWidth=".9" />
    <polyline points={line(greenEma)} fill="none" stroke="#86c456" strokeWidth=".9" />
    {[[132, 253, 268], [176, 237, 253], [423, 165, 182], [459, 180, 198], [531, 190, 208]].map(([x, a, b]) => (
      <g key={x} fill="#f2f2f2" stroke="#f2f2f2">
        <path d={`M${x} ${a}V${b}`} />
        <path d={`M${x - 2.5} ${a + 3}L${x} ${a - 1}L${x + 2.5} ${a + 3}Z`} />
      </g>
    ))}
    <path d="M378 145V160" stroke="#6e9a5a" />
    <path d="M375 158L378 163L381 158Z" fill="#7fd06a" />
    {[[115, 254], [163, 254], [433, 177], [493, 175]].map(([x, y]) => (
      <path key={x} d={`M${x - 2.5} ${y - 2}L${x} ${y + 3}L${x + 2.5} ${y - 2}Z`} fill="#b02a2a" />
    ))}
    <rect x="106" y="351" width="639" height="28" fill="#212629" />
    <path d="M106 365H745" stroke="#3c4144" />
    {macdBars.map(b => (
      <rect key={b.x} x={b.x} y={b.v > 0 ? 331 - b.v : 331} width="2" height={Math.abs(b.v)} fill={b.v > 0 ? "#2a8f7c" : "#b03a46"} />
    ))}
    <polyline points={line(macdTeal)} fill="none" stroke="#3f8f9a" strokeWidth=".9" />
    <polyline points={line(macdYellow)} fill="none" stroke="#bf964a" strokeWidth=".9" />
    <polyline points={line(rsiLine)} fill="none" stroke="#3f7fa5" strokeWidth=".9" />
    {squeezeBars.map(b => (
      <rect key={b.x} x={b.x} y={b.v > 0 ? 408 - b.v : 410} width="1" height={Math.abs(b.v)} fill={b.v > 0 ? "#35877f" : "#a8782e"} />
    ))}
    {squeezeRuns.map(([a, b, c]) => (
      <rect key={a} x={a} y="407" width={b - a} height="3.2" fill={c} />
    ))}
    <path d="M106 423H1005" stroke="#444" />
    {axisPrices.map(([t, y]) => (
      <text key={y} x="988" y={y} fontSize="7.6" fill="#555" fontFamily="Roboto">{t}</text>
    ))}
    {axisDates.map(([x, t]) => (
      <g key={t}>
        <path d={`M${x} 423v3`} stroke="#444" />
        <text x={x} y="435" fontSize="7.8" fill="#5c5c5c" textAnchor="middle" fontFamily="Roboto">{t}</text>
      </g>
    ))}
    <g stroke="#d8c8a8" strokeWidth="2.6" opacity=".9">
      <path d="M723 154V166M717 160H729" />
    </g>
  </Plot>
);

const PriceChart = () => {
  const ticks = Array.from({ length: 20 }, (_, i) => i);
  const pct = Array.from({ length: 14 }, (_, i) => 48 - i * 4);
  return (
    <ChartSvg $spill width="320" height="150" viewBox="226 519 320 150">
      <rect x="226.5" y="521" width="303.5" height="111" fill="#25481f" />
      <rect x="226.5" y="632" width="303.5" height="8" fill="#47201d" />
      <path d="M226.5 631.5H530" stroke="#6a3a30" strokeDasharray="2 2" />
      <polygon points={line(bandPrice)} fill="#27585a" opacity=".9" />
      <polyline points={line(meanPrice)} fill="none" stroke="#5d8fc0" strokeWidth="1.1" />
      <polyline points={line(randomPrice)} fill="none" stroke="#4a7a4a" strokeDasharray="1 2" />
      <path d="M226.5 640H530" stroke="#999" />
      {ticks.map(i => (
        <g key={i}>
          <path d={`M${228 + i * 15.4} 640v5`} stroke="#888" />
          <text transform={`translate(${229 + i * 15.4} 649) rotate(-45)`} textAnchor="end" fontSize="7" fill="#4c4c4c">{`+${(i + 1) * 4}cdl`}</text>
        </g>
      ))}
      {pct.map((p, i) => (
        <text key={p} x="533" y={524 + i * 9.17} fontSize="6.8" fill="#4a4a4a">{p}%</text>
      ))}
    </ChartSvg>
  );
};

const PerfChart = () => (
  <ChartSvg width="330" height="113" viewBox="552 519 330 113">
    {[535, 548, 575].map(y => <path key={y} d={`M554 ${y}H848`} stroke="#222" strokeDasharray="1 3" />)}
    <polygon points={`${line(perfBlue)} 848,561.7 554,561.7`} fill="#191b66" />
    <polyline points={line(perfBlue)} fill="none" stroke="#4a60d8" />
    <path d="M554 561.7H848" stroke="#7a2a30" strokeDasharray="2 2" />
    <polyline points={line(perfGreen)} fill="none" stroke="#3c7a44" />
    <path d="M554 588.5H848" stroke="#777" strokeWidth="1.4" />
    {[["150%", 523], ["100%", 537], ["50%", 550], ["0%", 564], ["-50%", 577], ["-100%", 591]].map(([t, y]) => (
      <text key={t} x="852" y={y} fontSize="7" fill="#4e4e4e">{t}</text>
    ))}
    {[["Jun '20", 593], ["Nov '20", 656], ["Apr '21", 716], ["Sep '21", 779], ["Feb '22", 841]].map(([t, x]) => (
      <g key={t}>
        <path d={`M${x} 588v5`} stroke="#666" />
        <text x={x} y="601" textAnchor="middle" fontSize="7.3" fill="#4e4e4e">{t}</text>
      </g>
    ))}
    <rect x="561.7" y="609" width="295" height="19" fill="#2c3a58" />
    <polygon points={`${line(navLine)} 856,628 561.7,628`} fill="#283a8e" />
    <polyline points={line(navLine)} fill="none" stroke="#5a78d0" />
    <path d="M688.5 609V628M837.5 609V628" stroke="#aab" />
    <text x="691" y="626" fontSize="7.4" fill="#8a94b8">2021</text>
    <text x="840" y="626" fontSize="7.4" fill="#8a94b8">2022</text>
    {[561, 855].map(x => (
      <g key={x} fill="#222" stroke="#bbb">
        <path d={`M${x - 5} 618l5-4v8zM${x + 5} 618l-5-4v8z`} />
      </g>
    ))}
  </ChartSvg>
);

const ContributionBar = () => (
  <ChartSvg width="330" height="12" viewBox="554 652 330 12">
    <rect x="554" y="652" width="218" height="11.5" fill="#421a1c" />
    <rect x="772" y="652" width="108" height="11.5" fill="#234d20" />
    {lossTicks.map(t => <path key={t} d={`M${540 + t / 3} 652v11.5`} stroke="#7a3a3a" />)}
    {winTicks.map(t => <path key={t} d={`M${540 + t / 3} 652v11.5`} stroke="#4f8a48" />)}
  </ChartSvg>
);

const DistChart = () => (
  <ChartSvg $mt={7} width="330" height="26" viewBox="554 684 330 26">
    <path d="M555 696H880" stroke="#2c4a2c" />
    <path d="M562 696H603" stroke="#a03040" strokeWidth="4" strokeDasharray="8 1" />
    {[608, 613, 628, 660, 699, 729, 777, 811].map(x => <circle key={x} cx={x} cy="696" r="2.4" fill="#2f6a35" />)}
    <path d="M582 692v8M625 692v8" stroke="#ccc" />
    <path d="M711 692v8" stroke="#4f9a4f" />
    <text x="568" y="690" fontSize="7.3" fill="#4e4e4e">avg.loss</text>
    <text x="606" y="690" fontSize="7.3" fill="#777">avg.return</text>
    <text x="696" y="690" fontSize="7.3" fill="#2e6a35">avg.gain</text>
    <text x="570" y="707" fontSize="7.3" fill="#4e3030">-2.99%</text>
    <text x="614" y="707" fontSize="7.3" fill="#666">3.06%</text>
    <text x="698" y="707" fontSize="7.3" fill="#2e6a35">15.17%</text>
  </ChartSvg>
);

const SeasonChart = () => (
  <ChartSvg width="181" height="115" viewBox="1018 535 181 115">
    <rect x="1018" y="535" width="177" height="58" fill="#25481f" />
    <rect x="1018" y="593" width="177" height="46" fill="#3f1c1a" />
    {seasonBars.map(x => <rect key={x} x={x} y="538" width="1.8" height="101" fill="#5f9a4c" opacity=".55" />)}
    <polyline points={line(seasonBlue)} fill="none" stroke="#6a6ad8" strokeWidth="1.1" opacity=".85" />
    <path d="M1043 540V600" stroke="#9aa" strokeDasharray="1 2" />
    {[1019, 1040, 1062, 1083, 1113, 1136, 1157, 1170].map(x => (
      <text key={x} x={x} y="549" fontSize="6.6" fill="#b8c4b0">100%</text>
    ))}
    <text x="1028" y="592" fontSize="6.6" fill="#b8c4b0">50%</text>
    {[1026, 1053, 1066, 1083, 1096, 1106, 1117, 1127, 1136, 1160, 1170, 1185].map(x => (
      <text key={x} x={x} y="635" fontSize="6.6" fill="#b8b0a8">0%</text>
    ))}
    <path d="M1018 639H1195" stroke="#777" />
    {Array.from({ length: 13 }, (_, i) => (
      <g key={i}>
        <path d={`M${1020 + i * 13.3} 639v4`} stroke="#666" />
        <text x={1020 + i * 13.3} y="650" textAnchor="middle" fontSize="7" fill="#4e4e4e">{1 + i * 4}</text>
      </g>
    ))}
  </ChartSvg>
);

export default function App() {
  return (
    <>
      <Global />
      <Page>
        <Screen>
          <TopBar>
            <Ticker>XLE</Ticker>
            <BarIcon $color="#444" $mr={10}><Star size={11} fill="#444" /></BarIcon>
            <BarIcon $color="#bbb"><RotateCw size={10} /></BarIcon>
            <ColorSwatch><Caret /></ColorSwatch>
            <TopButton $mr={10}>MTFA</TopButton>
            <TopButton>Auto Fib</TopButton>
            <TopButton $pad={6} $mr={0}>Trends</TopButton>
            <Dots />
            <TopButton $on $mr={0} $ml={4}>Indicators</TopButton>
            <Dots />
            <TopButton $mr={0} $ml={3}>Patterns</TopButton>
            <Dots />
            <TopButton $mr={0} $ml={4}>Heatmap</TopButton>
            <Dots />
            <TopButton $on $mr={0} $ml={1}>Other data</TopButton>
            <Dots />
            <TopButton $pad={5} $ml={11}>Create alert</TopButton>
            <TopButton>Scripts</TopButton>
            <Spacer />
            <TopButton $on $pad={1} $mr={3}>Strategy Tester</TopButton>
            <TopButton $pad={2}>Market Scanner</TopButton>
            <TopButton $pad={4} $mr={0}>Sidebar...</TopButton>
            <BellWrap><Bell size={10} /><Badge>9</Badge></BellWrap>
            <UserName>Gary Vaughan</UserName>
            <Avatar>
              <svg width="14" height="14" viewBox="0 0 14 14">
                <circle cx="7" cy="7" r="6.5" fill="#e9b04c" />
                <circle cx="7" cy="5.2" r="2.3" fill="#1a1a1a" />
                <path d="M2.8 11.5C3.5 8.8 10.5 8.8 11.2 11.5C9 13 5 13 2.8 11.5Z" fill="#1a1a1a" />
              </svg>
            </Avatar>
          </TopBar>
          <Body>
            <LeftCol>
              <ChartRow>
                <Rail>
                  {railDrawings.map((d, i) => <RailBtn key={i}>{d}</RailBtn>)}
                  <RailOpen><ChevronRight size={6} /></RailOpen>
                </Rail>
                <ChartPanel>
                  <MainChart />
                  <ChartFlow>
                    <ChartTools>
                      <ToolSelect $mr={6}>
                        <svg width="8" height="10" viewBox="0 0 8 10" stroke={GOLD}><path d="M2 0V7M6 3V10" /></svg>
                        <Caret />
                      </ToolSelect>
                      <ToolSelect $mr={14}>4 hours <Caret $color="#666" /></ToolSelect>
                      <ToolBtn><FaCog size={11} color="#e0a640" /></ToolBtn>
                      <ToolBtn>
                        <svg width="12" height="10" viewBox="0 0 12 10" fill="none" stroke={GOLD}><path d="M1 8L4 3L7 7L9 5L11 9" /></svg>
                      </ToolBtn>
                      <ToolBtn><Clock size={11} color="#ccc" /></ToolBtn>
                      <ToolBtn>
                        <svg width="13" height="11" viewBox="0 0 13 11" fill="none" stroke={GOLD}><path d="M1 9L12 2M1 5L5 6L8 4L12 6" /></svg>
                      </ToolBtn>
                      <LogBtn>Log</LogBtn>
                    </ChartTools>
                    <SymbolLine>
                      <SymbolName>SPDR Select Sector Fund - Energy Select Se..., 4 hours, Nasdaq + Nyse BQT</SymbolName>
                      <Ohlc>O <b>68.68</b></Ohlc>
                      <Ohlc>H <b>68.94</b></Ohlc>
                      <Ohlc>L <b>68.59</b></Ohlc>
                      <Ohlc>C <b>68.84</b></Ohlc>
                      <Ohlc>Period <b>+0.23%</b></Ohlc>
                    </SymbolLine>
                    <Legend>
                      {legendRows.map(r => (
                        <LegendRow key={r.name} $color={r.color}>
                          {r.name}
                          {!r.noDots && <DotsChip />}
                          <TimeChip $on={r.chip} $ml={r.noDots ? 6 : 3}>4h</TimeChip>
                          {r.value && <ChipValue>{r.value}</ChipValue>}
                          {r.warn && <ChipValue $ml={10} $color="#a8702a">{r.warn}</ChipValue>}
                        </LegendRow>
                      ))}
                    </Legend>
                  </ChartFlow>
                  <PaneLegend $y={305} $color="#66607a">
                    MACD (12, 26, 9, close)<DotsChip /><TimeChip $on>4h</TimeChip>
                    <ChipValue $color="#2f7a9a">1.33</ChipValue>
                    <ChipValue $color="#a8843e">1.45</ChipValue>
                    <ChipValue $color="#6a2a2a">-0.13</ChipValue>
                  </PaneLegend>
                  <PaneLegend $y={345} $color="#2f7a9a">
                    Relative Strength Index (14, 70, 30, close)<DotsChip /><TimeChip $on>4h</TimeChip>
                    <ChipValue>61.67</ChipValue>
                  </PaneLegend>
                  <PaneLegend $y={385} $color="#6a2128">
                    BB/KC Squeeze (20, 2, 2, 10, close)<DotsChip /><TimeChip $on>4h</TimeChip>
                    <ChipValue $color="#3f9a8c">2.316</ChipValue>
                  </PaneLegend>
                  {notes.map(n => (
                    <Note key={n.text} $x={n.x} $y={n.y} $color={n.color} $size={n.size}>{n.text}</Note>
                  ))}
                  <VertNote>VbP start (manual)</VertNote>
                  <PriceTag $x={985} $y={66} $w={26} $h={13} $bg="#d8404f" $color="#f3d0d0">68.42</PriceTag>
                  <PriceTag $x={984} $y={153} $w={22} $h={11} $bg="#333" $color="#aaa">58.14</PriceTag>
                  <PriceTag $x={674} $y={424} $w={78} $h={15} $bg="#343434" $color="#c8c8c8">Feb 10, 2022 09:30</PriceTag>
                  <CornerSpot $x={968} $y={36}><Corners size={11} /></CornerSpot>
                  <CornerSpot $x={989} $y={36} $color="#f0b04c"><Camera size={12} /></CornerSpot>
                </ChartPanel>
              </ChartRow>
              <Tester>
                <TesterHead>
                  <TesterTitle>Strategy Tester</TesterTitle>
                  <Spacer />
                  <TutorialLink><Tv size={11} color={GOLD} /> Tutorial</TutorialLink>
                  <Toggle />
                  <HeadLabel>Maximize</HeadLabel>
                </TesterHead>
                <TesterBody>
                  <Sidebar>
                    <SearchBox>Search for strategies <X size={10} color="#888" /></SearchBox>
                    <StrategyItem $active>Main Algo - 4HR</StrategyItem>
                    <StrategyItem>Basic 30M EMA Cross Strategy<em>#sample</em></StrategyItem>
                    <StrategyItem>RSI + Bollinger Bands Volatility Str...<em>#sample</em></StrategyItem>
                    <StrategyItem>Weekly Anchored OBV Strategy @ ...<em>#sample</em></StrategyItem>
                    <SideFoot>NEW STRATEGY</SideFoot>
                    <Collapse><ChevronLeft size={10} /></Collapse>
                  </Sidebar>
                  <TesterMain>
                    <ConfigRow>
                      <NameField>Main Algo - 4HR</NameField>
                      <ConfigSelect $mr={9} $gap={8}>
                        <svg width="8" height="10" viewBox="0 0 8 10" stroke={GOLD}><path d="M2 0V7M6 3V10" /></svg>
                        <Caret />
                      </ConfigSelect>
                      <ConfigSelect $mr={12} $gap={8}>4 hours <Caret $color="#666" /></ConfigSelect>
                      <ExtBox />
                      <ExtLabel>ext.<br />hours</ExtLabel>
                      Data
                      <ConfigSelect $mr={5} $gap={1}>1,000 candles<Caret $color="#999" /></ConfigSelect>
                      Trade by
                      <ConfigSelect $ml={4} $mr={7} $gap={12}>Open <Caret $color="#666" /></ConfigSelect>
                      <ConfigSelect $mr={0} $gap={4}>Long only <Caret $color="#666" /></ConfigSelect>
                      <RunBtn>RUN</RunBtn>
                      <Trades>Trades...</Trades>
                      <Spacer />
                      <CheckCheck size={15} color="#4fae5a" />
                      <SaveBtn>Save</SaveBtn>
                      <Dots $color="#bbb" $m={5} />
                    </ConfigRow>
                    <Panes>
                      <PricePane>
                        <PaneTitle>Price behavior explorer</PaneTitle>
                        <HelpSpot><CircleHelp size={11} /></HelpSpot>
                        <CornerRight $r={18}><Corners size={10} /></CornerRight>
                        <PriceChart />
                        <PriceLegend>
                          <KeyItem $key="#4a6aa0">Mean Change%</KeyItem>
                          <KeyItem $off $key="#444">Median Change%</KeyItem>
                          <KeyItem $key="#3a4a3a">Random Control (Mean)</KeyItem>
                          <KeyItem $off $key="#333"># Of Positions</KeyItem>
                          <KeyItem $dot $key="#2f5560">25th/75th percentile</KeyItem>
                          <KeyItem $dot $off $key="#555">Min/Max Change%</KeyItem>
                        </PriceLegend>
                        <PriceNote>27 positions analyzed across 2 years of XLE data (1000 candles). Mean trade</PriceNote>
                      </PricePane>
                      <PerfPane>
                        <PaneTitle>
                          Performance chart: 94.73% vs 32.33% for Asset Performance
                          <TriangleAlert size={10} fill="#888" color="#888" />
                        </PaneTitle>
                        <CornerRight $r={17}><Corners size={10} /></CornerRight>
                        <PerfChart />
                        <PerfKeys>
                          <KeyItem $dot $key="#3f68e0">Strategy</KeyItem>
                          <KeyItem $key="#555">Asset (XLE)</KeyItem>
                          <KeyItem $key="#5f9ac0">Positions</KeyItem>
                          <KeyItem $dot $off $key="#555">Drawdown</KeyItem>
                        </PerfKeys>
                        <ContributionBar />
                        <PerfCaption>
                          <span>losers 67% (18)</span>
                          <span className="mid">position contribution chart</span>
                          <span>(9) 33% winners</span>
                        </PerfCaption>
                        <DistChart />
                        <PerfCaption>
                          <span>-7.05% min</span>
                          <span className="mid">position return distribution chart</span>
                          <span>max 39.15%</span>
                        </PerfCaption>
                      </PerfPane>
                      <Tabular>
                        <TabHead>Tabular Data</TabHead>
                        {tabular.map(([k, v]) => (
                          <TabRow key={k}><span>{k}</span><span>{v}</span></TabRow>
                        ))}
                        <VScroll $r={1} $t={2} $h={100} />
                      </Tabular>
                    </Panes>
                  </TesterMain>
                </TesterBody>
              </Tester>
            </LeftCol>
            <RightCol>
              <SidePanel $h={243}>
                <PanelHead>
                  Brokerage Holdings
                  <Caret $ml={5} />
                  <Spacer />
                  <Dots />
                  <CornerInline $ml={10}><Corners size={10} /></CornerInline>
                </PanelHead>
                <HoldGrid $head><span>Symbol ▲</span><span>Last</span><span>Change</span><SortGlyph /></HoldGrid>
                {holdings.map(([s, l, c, pos, dot]) => (
                  <HoldGrid key={s}>
                    <b>{s}</b><span>{l}</span><Change>{c}</Change>
                    <RowRule />
                    <RangeMark $l={pos} $dot={dot} />
                  </HoldGrid>
                ))}
                <HoldGrid><b>BABA</b><span>126.04</span><Change $up>+0.38%</Change></HoldGrid>
                <VScroll $r={4} $t={39} $h={48} />
              </SidePanel>
              <SidePanel $h={232}>
                <PanelHead $h={23} $pb={5}>
                  Alerts <small>(30 of 100 used)</small>
                  <Spacer />
                  <Search size={10} color="#d8a448" />
                  <Dots $m={9} />
                  <CornerInline><Corners size={10} /></CornerInline>
                </PanelHead>
                {alerts.map(([sym, text, tall]) => (
                  <AlertItem key={sym} $tall={tall}>
                    <div><AlertMark>!!</AlertMark><b>{sym}</b>{!tall && <span>{text}</span>}</div>
                    {tall && <span>{text}<br /></span>}
                    Active (Multifactor Alert)
                  </AlertItem>
                ))}
                <VScroll $r={4} $t={24} $h={48} />
              </SidePanel>
              <SidePanel>
                <PanelHead $h={29} $plain>
                  Seasonality for XLE (a year)
                  <Spacer />
                  <CircleHelp size={11} color="#d4a548" />
                </PanelHead>
                <SeasonChart />
                <SeasonKeys>
                  <KeyItem $dot $key="#2f7a35">Winning perio...</KeyItem>
                  <KeyItem $key="#a040c0">Median Chang...</KeyItem>
                  <KeyItem $key="#4a60c8">Mean Change%</KeyItem>
                  <KeyItem $dot $off $key="#555">P25% / P75%</KeyItem>
                  <KeyItem $dot $key="#3a4a28">Min/Max</KeyItem>
                  <KeyItem $off $key="#333">Raw data</KeyItem>
                </SeasonKeys>
                <SeasonFoot>
                  <ConfigSelect $mr={4} $gap={4}>Week of year <Caret $color="#666" /></ConfigSelect>
                  Since
                  <DateValue>1/11/2021</DateValue>
                  <Caret $color="#999" />
                  <FilterIcon size={8} color="#e8b04c" fill="#e8b04c" />
                  <Orange />
                </SeasonFoot>
              </SidePanel>
            </RightCol>
          </Body>
        </Screen>
        <Stripe><span>0</span><span>0</span></Stripe>
      </Page>
    </>
  );
}
